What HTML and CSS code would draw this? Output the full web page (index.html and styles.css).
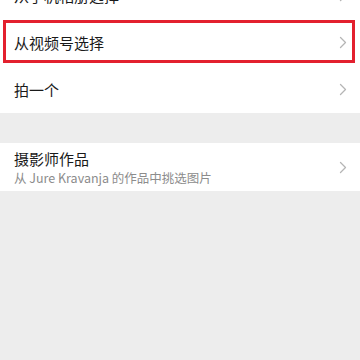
FILE: index.html
```html
<!DOCTYPE html>
<html lang="zh">
<head>
<meta charset="utf-8">
<link rel="stylesheet" href="styles.css">
</head>
<body>
<div class="page">
  <div class="group first">
    <div class="row"><span class="label">从手机相册选择</span><svg class="chev" width="8" height="13" viewBox="0 0 8 13"><polyline points="1.5,1.5 6.5,6.5 1.5,11.5" /></svg></div>
    <div class="row marked"><span class="label">从视频号选择</span><svg class="chev" width="8" height="13" viewBox="0 0 8 13"><polyline points="1.5,1.5 6.5,6.5 1.5,11.5" /></svg></div>
    <div class="row"><span class="label">拍一个</span><svg class="chev" width="8" height="13" viewBox="0 0 8 13"><polyline points="1.5,1.5 6.5,6.5 1.5,11.5" /></svg></div>
  </div>
  <div class="group">
    <div class="row tall">
      <div class="texts">
        <span class="label">摄影师作品</span>
        <span class="sub">从 Jure Kravanja 的作品中挑选图片</span>
      </div>
      <svg class="chev" width="8" height="13" viewBox="0 0 8 13"><polyline points="1.5,1.5 6.5,6.5 1.5,11.5" /></svg>
    </div>
  </div>
</div>
</body>
</html>
```
FILE: styles.css
```css
html, body {
  margin: 0;
  padding: 0;
  background: #ededed;
  font-family: "Noto Sans CJK SC", "Noto Sans", sans-serif;
}
.page {
  display: flex;
  flex-direction: column;
  gap: 30px;
}
.group {
  background: #fff;
  display: flex;
  flex-direction: column;
}
.group.first {
  margin-top: -28px;
}
.row {
  position: relative;
  height: 47px;
  display: flex;
  align-items: center;
  justify-content: space-between;
  padding: 0 13px 0 14px;
}
.row.tall {
  height: 48px;
}
.label {
  font-size: 15px;
  color: #1a1a1a;
  line-height: 20px;
}
.texts {
  display: flex;
  flex-direction: column;
  padding-top: 1px;
}
.sub {
  font-size: 12.5px;
  color: #8c8c8c;
  line-height: 17px;
}
.chev {
  flex: none;
}
.chev polyline {
  fill: none;
  stroke: #b5b5b5;
  stroke-width: 1.3;
  stroke-linecap: round;
  stroke-linejoin: round;
}
.marked::after {
  content: "";
  position: absolute;
  top: 1px;
  left: 3px;
  right: 5px;
  bottom: 3px;
  border: 3px solid #e3202e;
  pointer-events: none;
}
```
